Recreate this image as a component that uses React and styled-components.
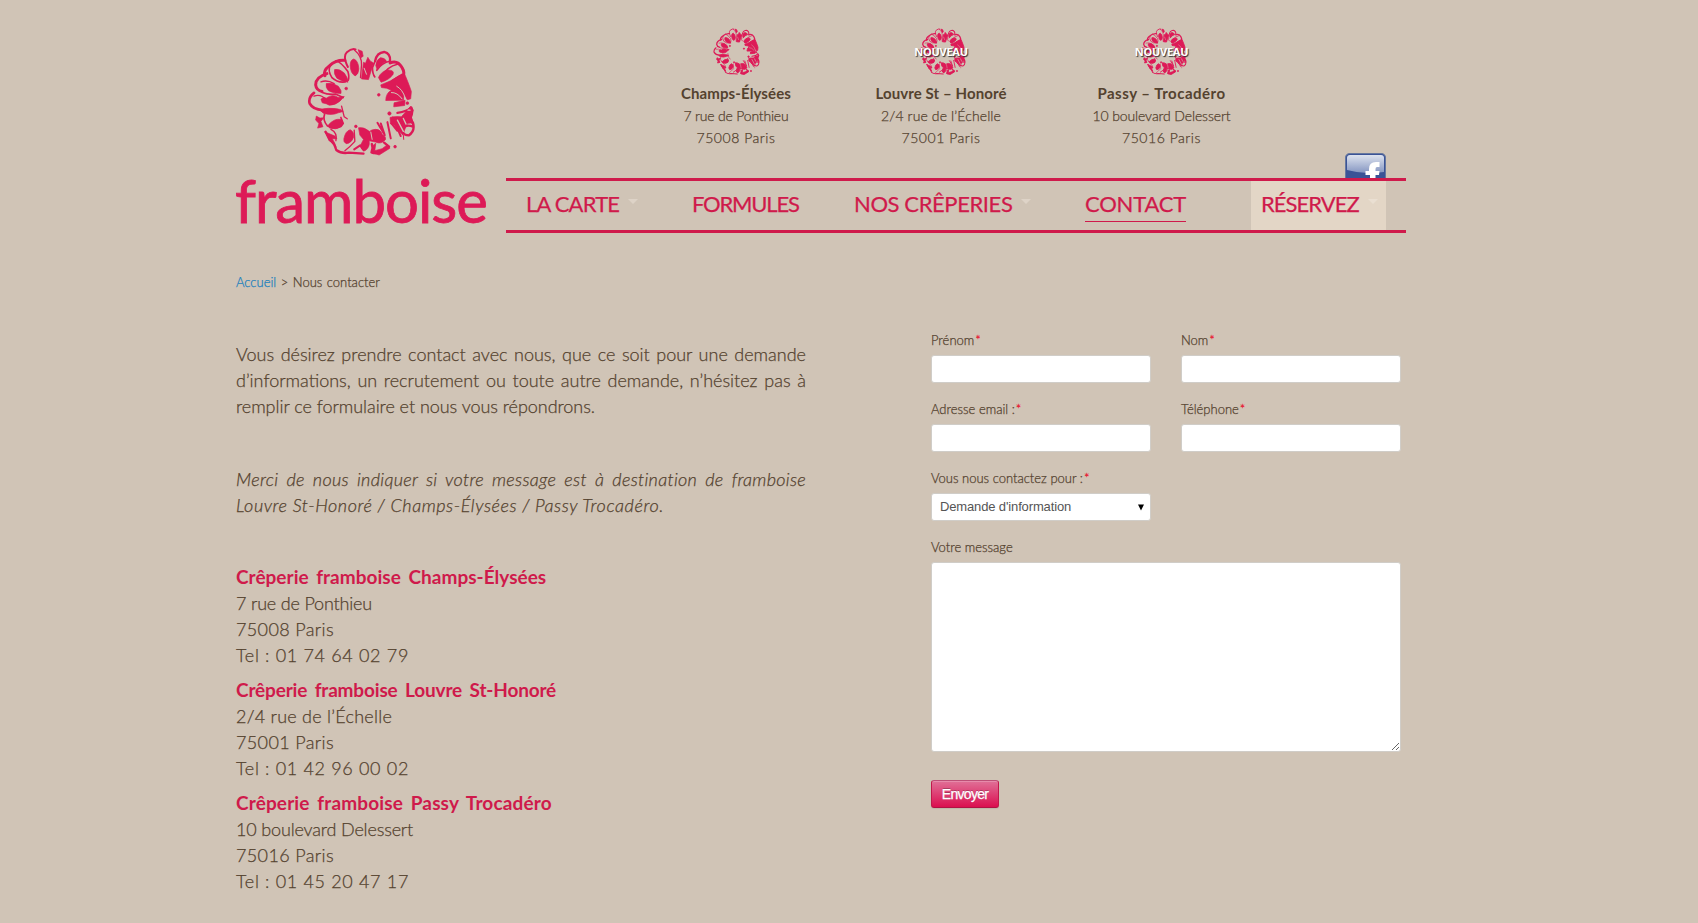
import React from 'react';
import styled, { createGlobalStyle } from 'styled-components';

const RASPBERRY = '#dd1a57';
const CRIMSON = '#cf1a4b';
const BROWN = '#54422f';

const GlobalStyle = createGlobalStyle`
  * { box-sizing: border-box; }
  body {
    margin: 0;
    background: #d0c4b6;
    color: ${BROWN};
    font-family: Lato, 'Liberation Sans', sans-serif;
    font-weight: 300;
    overflow: hidden;
  }
`;

const Page = styled.div`
  width: 1406px;
  height: 923px;
  padding-left: 236px;
  -webkit-text-stroke: 0.25px currentColor;
`;

const Header = styled.header`
  display: flex;
  height: 233px;
`;

const Brand = styled.a`
  width: 270px;
  display: flex;
  flex-direction: column;
  padding-top: 47px;
`;

const BrandFlower = styled.div`
  margin-left: 71px;
  height: 110px;
`;

const Wordmark = styled.svg`
  display: block;
  margin-top: 8px;
  overflow: visible;
  text {
    font: 400 60px Lato, sans-serif;
    fill: ${RASPBERRY};
    stroke: ${RASPBERRY};
    stroke-width: 0.8;
  }
`;

const HeaderMain = styled.div`
  width: 900px;
  display: flex;
  flex-direction: column;
`;

const TopRow = styled.div`
  height: 178px;
  display: flex;
  padding: 28px 20px 0 135px;
`;

const Store = styled.div`
  width: ${(p) => p.$width}px;
  display: flex;
  flex-direction: column;
  align-items: center;
  font-size: 14px;
  line-height: 22px;
  white-space: nowrap;
`;

const StoreMark = styled.div`
  position: relative;
  height: 47px;
  margin-bottom: 7px;
  padding-left: ${(p) => (p.$shifted ? 3 : 0)}px;
`;

const NewBadge = styled.span`
  position: absolute;
  left: 50%;
  top: 14px;
  transform: translateX(-50%);
  color: #fff;
  font: 700 11px/20px 'Open Sans', sans-serif;
  letter-spacing: -0.25px;
  text-shadow: 1px 1px 1px #333;
  -webkit-text-stroke: 0;
`;

const Spaced = styled.span`
  letter-spacing: ${(p) => p.$tracking || 0}px;
`;

const StoreName = styled(Spaced)`
  height: 23px;
  font-size: 15px;
  font-weight: 700;
  -webkit-text-stroke: 0;
`;

const FacebookLink = styled.a`
  margin-left: auto;
  align-self: flex-end;
  height: 25px;
`;

const Nav = styled.nav`
  height: 55px;
  display: flex;
  padding-left: 20px;
  border-top: 3px solid ${CRIMSON};
  border-bottom: 3px solid ${CRIMSON};
`;

const NavItem = styled.div`
  width: ${(p) => p.$width}px;
  display: flex;
  align-items: flex-start;
  padding: 4px 0 0 ${(p) => (p.$highlight ? 10 : 0)}px;
  background: ${(p) => (p.$highlight ? '#e3d6c6' : 'transparent')};
`;

const NavLink = styled.a`
  height: 37px;
  font-size: 22px;
  font-weight: 400;
  line-height: 37px;
  color: ${CRIMSON};
  white-space: nowrap;
  letter-spacing: ${(p) => p.$tracking}px;
  border-bottom: 1px solid ${(p) => (p.$active ? CRIMSON : 'transparent')};
`;

const Caret = styled.i`
  margin: 14px 0 0 9px;
  border: 5px solid transparent;
  border-top: 5px solid ${(p) => (p.$light ? '#eadfd2' : '#ded3c7')};
  border-bottom: 0;
`;

const Breadcrumb = styled.div`
  margin-top: 39px;
  font-size: 13px;
  line-height: 20px;
  word-spacing: 1px;
  a { color: #1a80bd; }
`;

const Main = styled.main`
  display: flex;
  justify-content: space-between;
  width: 1165px;
`;

const Intro = styled.section`
  width: 570px;
  padding-top: 49px;
  font-size: 18px;
  line-height: 26px;
  white-space: nowrap;
`;

const Paragraph = styled.p`
  margin: 0 0 ${(p) => p.$gap}px;
  font-style: ${(p) => (p.$italic ? 'italic' : 'normal')};
`;

const Line = styled.span`
  display: block;
  letter-spacing: ${(p) => p.$tracking || 0}px;
  text-align-last: ${(p) => (p.$full ? 'justify' : 'left')};
  white-space: ${(p) => (p.$full ? 'normal' : 'nowrap')};
`;

const Address = styled.address`
  font-style: normal;
  margin-bottom: 9px;
`;

const AddressTitle = styled(Line)`
  color: ${CRIMSON};
  font-size: 19px;
  font-weight: 700;
  word-spacing: 3px;
  -webkit-text-stroke: 0;
`;

const Form = styled.form`
  width: 470px;
  padding-top: 38px;
  display: grid;
  grid-template-columns: 220px 220px;
  column-gap: 30px;
  row-gap: 16px;
  align-content: start;
`;

const Field = styled.label`
  grid-column: ${(p) => (p.$wide ? '1 / 3' : p.$first ? '1' : 'auto')};
  display: flex;
  flex-direction: column;
  gap: 5px;
  font-size: 13px;
  line-height: 20px;
`;

const Required = styled.span`
  color: #e8112d;
  margin-left: 1px;
`;

const Input = styled.input`
  width: 100%;
  height: 28px;
  border: 1px solid #d0cdc8;
  border-radius: 3px;
  background: #fff;
`;

const Select = styled.div`
  height: 28px;
  display: flex;
  align-items: center;
  justify-content: space-between;
  padding: 0 6px 0 8px;
  border: 1px solid #d0cdc8;
  border-radius: 3px;
  background: #fff;
  color: #555;
  font: 13px/26px 'Liberation Sans', sans-serif;
  letter-spacing: -0.14px;
  -webkit-text-stroke: 0;
`;

const Textarea = styled.textarea`
  display: block;
  width: 100%;
  height: 190px;
  border: 1px solid #d0cdc8;
  border-radius: 3px;
  background: #fff;
  resize: both;
`;

const Submit = styled.button`
  justify-self: start;
  margin-top: 12px;
  width: 68px;
  height: 28px;
  padding: 0;
  border: 1px solid;
  border-color: #bd4f77 #c0184c #b01244;
  border-radius: 3px;
  background: linear-gradient(#e07097, #db0f50);
  box-shadow: inset 0 1px 0 rgba(255, 255, 255, 0.2), 0 1px 1px rgba(0, 0, 0, 0.08);
  color: #fff;
  font: 14px/24px 'Liberation Sans', sans-serif;
  letter-spacing: -0.7px;
  text-shadow: 0 -1px 0 rgba(0, 0, 0, 0.25);
`;

const Flower = ({ size, weight = 2 }) => (
  <svg width={size} height={size} viewBox="258 50 328 328" fill={RASPBERRY} stroke={RASPBERRY} strokeWidth={weight} strokeLinejoin="round">
    <g fill="none" strokeWidth="6" strokeLinecap="round">
      <path d="M381 110 Q365 78 378 66 Q392 53 404 57" />
      <path d="M372 90 Q345 88 326 106 Q305 122 312 136" strokeWidth="9" />
      <path d="M400 58 Q424 78 422 104 L419 142" strokeWidth="4" />
      <path d="M345 92 Q360 94 381 124 Q386 140 382 150" strokeWidth="5" />
      <path d="M330 104 Q318 118 333 142 Q350 158 373 155" strokeWidth="5" />
      <path d="M318 130 Q284 140 284 164 Q286 180 303 184" strokeWidth="9" />
      <path d="M300 155 Q318 148 340 160" strokeWidth="4" />
      <path d="M279 188 Q261 202 266 220 Q276 238 305 240 L350 240" strokeWidth="8" />
      <path d="M279 198 Q300 190 316 210" strokeWidth="4" />
      <path d="M304 187 Q320 194 345 192 L367 202" strokeWidth="5" />
      <path d="M362 228 L370 260 L379 266" strokeWidth="4" />
      <path d="M311 252 Q304 270 320 288 Q350 302 367 280 L360 262" strokeWidth="5" />
      <path d="M314 305 L326 330 Q340 338 346 360 Q362 372 384 368 L428 371" strokeWidth="7" />
      <path d="M330 298 Q350 308 345 332" strokeWidth="4" />
      <path d="M400 300 L402 334 Q388 350 372 362" strokeWidth="4" />
      <path d="M400 358 L418 346 L429 361" />
      <path d="M453 342 Q458 355 452 367 Q470 374 490 360 L505 350 L490 338" strokeWidth="7" />
      <path d="M463 92 Q468 67 490 65 Q510 70 508 92" strokeWidth="7" />
      <path d="M463 92 L455 112 Q455 132 462 140 M508 92 Q482 98 468 120" strokeWidth="5" />
      <path d="M508 98 Q530 88 544 112 Q554 128 545 142" strokeWidth="9" />
      <path d="M530 102 Q500 108 480 142 M545 132 Q530 140 500 162" strokeWidth="5" />
      <path d="M530 248 Q560 244 572 232 Q578 246 570 262 L577 282" strokeWidth="7" />
      <path d="M577 278 Q584 304 564 316 Q540 314 548 292 Q560 282 577 290" strokeWidth="7" />
      <path d="M470 278 L492 315 L480 280 M500 276 L510 325 M516 262 L540 318 M512 280 L530 302" strokeWidth="6" />
      <path d="M548 316 L549 328" strokeWidth="3" />
    </g>
    <path d="M388 106 Q388 88 399 86 Q413 92 414 116 Q413 132 403 137 Q389 130 388 106Z" />
    <path d="M341 118 Q355 114 370 128 Q382 144 381 156 Q362 154 348 144 Q338 132 341 118Z" />
    <path d="M316 160 Q336 156 352 168 Q364 182 360 190 Q338 190 323 182 Q313 172 316 160Z" />
    <path d="M300 207 Q308 198 316 204 Q334 190 352 202 L370 199 L357 213 Q342 226 325 225 Q317 220 304 218Z" />
    <path d="M297 240 Q316 230 359 238 L367 244 L352 248 Q333 257 307 249Z" />
    <path d="M286 258 L297 264 L308 263 L300 274 L306 290 L290 294 L294 280 L284 270Z" />
    <path d="M322 285 Q340 264 360 268 Q371 276 362 290 Q345 300 326 294Z" />
    <path d="M311 305 L342 318 L348 326 L334 326 Q342 338 346 352 L329 332Z" />
    <path d="M369 326 Q374 302 388 299 Q401 306 398 322 Q391 340 376 341 Q367 336 369 326Z" />
    <path d="M413 293 Q430 290 446 304 L453 300 Q478 292 485 314 Q496 318 494 329 Q482 344 464 336 L445 332 Q448 350 435 361 Q420 364 420 344 L428 328 L417 315Z" />
    <path d="M428 96 L434 99 L441 81 L448 92 L458 98 L443 148 L422 146Z" />
    <path d="M412 58 L424 63 L427 78 L420 82Z" />
    <path d="M465 106 Q466 88 479 82 Q493 82 498 94 Q480 100 469 118Z" />
    <path d="M473 142 Q482 122 502 119 Q522 120 517 132 Q507 148 481 156Z" />
    <path d="M480 164 Q510 154 536 136 L552 132 Q566 165 572 184 L570 206 L560 209 L550 193 L548 210 L495 211 Q495 189 512 180 Q498 172 482 172Z" />
    <path d="M520 218 L553 210 L552 226 L519 230Z" />
    <path d="M508 262 Q524 258 542 260 L570 228 L578 240 L570 260 L578 280 Q560 276 557 286 L546 315 L520 285 L509 281Z" />
    <path d="M452 368 L458 345 L465 340 L462 362 L484 356 L500 344 L507 355 L475 375Z" />
    <g fill="none" stroke="#d0c4b6" strokeWidth="4" strokeLinecap="round">
      <path d="M528 168 Q546 178 553 202 M512 187 Q530 186 544 206" strokeWidth="3" />
      <path d="M530 270 L548 304 M548 265 L556 282 M562 240 L568 240" />
      <path d="M450 306 L454 328 M430 114 L437 132" strokeWidth="3" />
    </g>
    <circle cx="376" cy="175" r="4" />
    <circle cx="474" cy="194" r="4" />
    <circle cx="506" cy="250" r="5" />
    <circle cx="405" cy="289" r="4" />
    <circle cx="523" cy="350" r="4" />
    <circle cx="560" cy="219" r="4" />
  </svg>
);

const FacebookIcon = () => (
  <svg width="41" height="25" viewBox="0 0 41 25">
    <defs>
      <linearGradient id="fbGloss" x1="0" y1="0" x2="0" y2="1">
        <stop offset="0" stopColor="#dde3ef" />
        <stop offset="1" stopColor="#8495c1" />
      </linearGradient>
    </defs>
    <path d="M0.5 25 V5 Q0.5 0.5 5 0.5 H36 Q40.5 0.5 40.5 5 V25Z" fill="#3b5396" />
    <path d="M0.5 25 V5 Q0.5 0.5 5 0.5 H36 Q40.5 0.5 40.5 5 V25" fill="none" stroke="#66789f" />
    <path d="M2 17 V5 Q2 2 5 2 H36 Q39 2 39 5 V19 Q20 22 2 17Z" fill="url(#fbGloss)" />
    <path d="M25 25 V22 H20.5 V18 H24 V16 Q24 9 31 9 H34.5 V14 H32 Q30.5 14 30.5 16 V18 H34.5 L34 22 H30.5 V25Z" fill="#fff" />
  </svg>
);

const stores = [
  { width: 190, name: 'Champs-Élysées', nameTracking: 0.1, street: '7 rue de Ponthieu', streetTracking: -0.19, city: '75008 Paris' },
  { width: 220, name: 'Louvre St – Honoré', nameTracking: 0.1, street: '2/4 rue de l’Échelle', streetTracking: 0.13, city: '75001 Paris', isNew: true },
  { width: 221, name: 'Passy – Trocadéro', nameTracking: 0.5, street: '10 boulevard Delessert', streetTracking: -0.11, city: '75016 Paris', isNew: true },
];

const navItems = [
  { label: 'LA CARTE', width: 166, tracking: -0.8, caret: true },
  { label: 'FORMULES', width: 162, tracking: -1.2 },
  { label: 'NOS CRÊPERIES', width: 231, tracking: -0.4, caret: true },
  { label: 'CONTACT', width: 166, tracking: -0.2, active: true },
  { label: 'RÉSERVEZ', width: 135, tracking: -0.95, caret: true, highlight: true },
];

const addresses = [
  { title: 'Crêperie framboise Champs-Élysées', tt: 0.02, street: '7 rue de Ponthieu', st: -0.18, city: '75008 Paris', tel: 'Tel : 01 74 64 02 79' },
  { title: 'Crêperie framboise Louvre St-Honoré', tt: -0.16, street: '2/4 rue de l’Échelle', st: 0.25, city: '75001 Paris', tel: 'Tel : 01 42 96 00 02' },
  { title: 'Crêperie framboise Passy Trocadéro', tt: 0.14, street: '10 boulevard Delessert', st: -0.16, city: '75016 Paris', tel: 'Tel : 01 45 20 47 17' },
];

export default function App() {
  return (
    <>
      <GlobalStyle />
      <Page>
        <Header>
          <Brand>
            <BrandFlower><Flower size={109} /></BrandFlower>
            <Wordmark width="252" height="62" viewBox="0 0 252 62">
              <text x="-1" y="57.5" textLength="253">framboise</text>
            </Wordmark>
          </Brand>
          <HeaderMain>
            <TopRow>
              {stores.map((s) => (
                <Store key={s.name} $width={s.width}>
                  <StoreMark $shifted={s.isNew}>
                    <Flower size={47} weight={6} />
                    {s.isNew && <NewBadge>NOUVEAU</NewBadge>}
                  </StoreMark>
                  <StoreName $tracking={s.nameTracking}>{s.name}</StoreName>
                  <Spaced $tracking={s.streetTracking}>{s.street}</Spaced>
                  <Spaced $tracking={0.54}>{s.city}</Spaced>
                </Store>
              ))}
              <FacebookLink><FacebookIcon /></FacebookLink>
            </TopRow>
            <Nav>
              {navItems.map((n) => (
                <NavItem key={n.label} $width={n.width} $highlight={n.highlight}>
                  <NavLink $tracking={n.tracking} $active={n.active}>{n.label}</NavLink>
                  {n.caret && <Caret $light={n.highlight} />}
                </NavItem>
              ))}
            </Nav>
          </HeaderMain>
        </Header>

        <Breadcrumb><a>Accueil</a> &gt; Nous contacter</Breadcrumb>

        <Main>
          <Intro>
            <Paragraph $gap={47}>
              <Line $full>Vous désirez prendre contact avec nous, que ce soit pour une demande</Line>
              <Line $full>d’informations, un recrutement ou toute autre demande, n’hésitez pas à</Line>
              <Line $tracking={-0.04}>remplir ce formulaire et nous vous répondrons.</Line>
            </Paragraph>
            <Paragraph $gap={46} $italic>
              <Line $full $tracking={0.3}>Merci de nous indiquer si votre message est à destination de framboise</Line>
              <Line $tracking={0.55}>Louvre St-Honoré / Champs-Élysées / Passy Trocadéro.</Line>
            </Paragraph>
            {addresses.map((a) => (
              <Address key={a.title}>
                <AddressTitle $tracking={a.tt}>{a.title}</AddressTitle>
                <Line $tracking={a.st}>{a.street}</Line>
                <Line $tracking={0.37}>{a.city}</Line>
                <Line $tracking={0.67}>{a.tel}</Line>
              </Address>
            ))}
          </Intro>

          <Form>
            <Field><span>Prénom<Required>*</Required></span><Input /></Field>
            <Field><span>Nom<Required>*</Required></span><Input /></Field>
            <Field><span>Adresse email :<Required>*</Required></span><Input /></Field>
            <Field><span>Téléphone<Required>*</Required></span><Input /></Field>
            <Field $first>
              <span>Vous nous contactez pour :<Required>*</Required></span>
              <Select>
                Demande d'information
                <svg width="6" height="7" viewBox="0 0 6 7"><path d="M0 0.5H6L3 6.5Z" fill="#000" /></svg>
              </Select>
            </Field>
            <Field $wide><span>Votre message</span><Textarea /></Field>
            <Submit type="button">Envoyer</Submit>
          </Form>
        </Main>
      </Page>
    </>
  );
}
